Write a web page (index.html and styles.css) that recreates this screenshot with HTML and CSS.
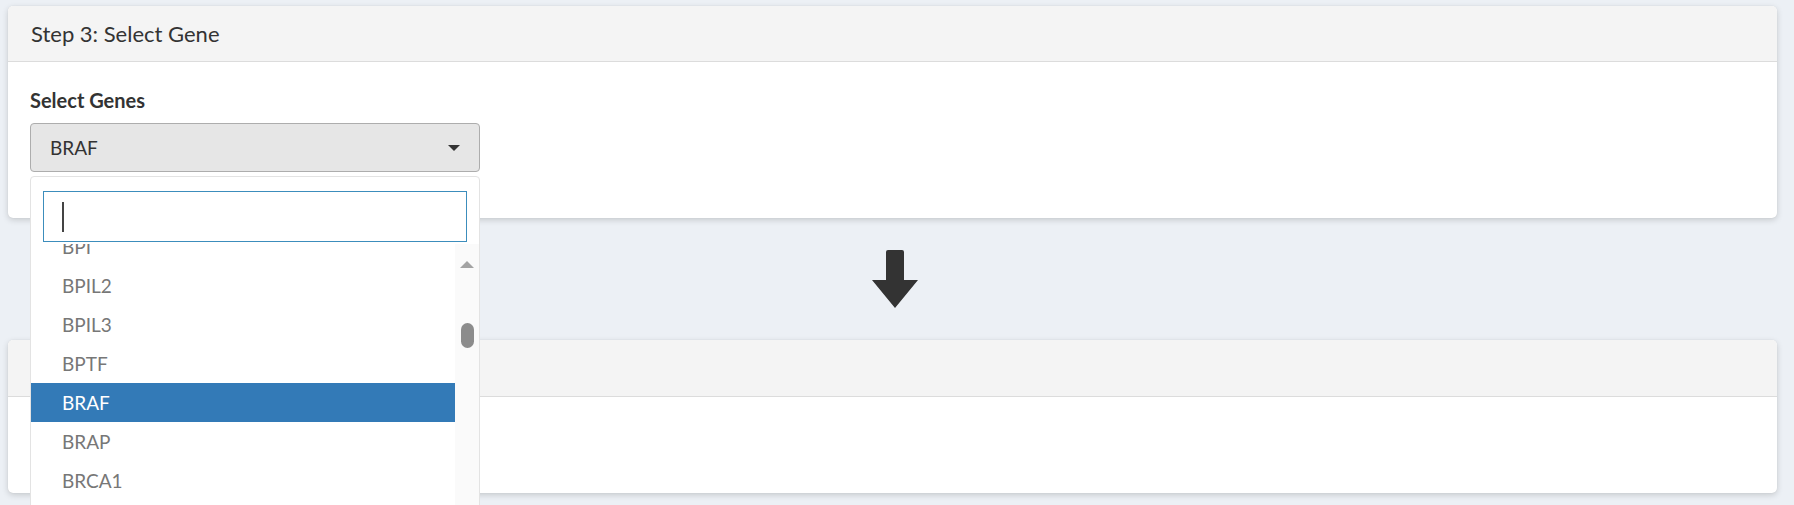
FILE: index.html
```html
<!DOCTYPE html>
<html>
<head>
<meta charset="utf-8">
<link rel="stylesheet" href="styles.css">
</head>
<body>
<div class="page">
  <section class="card card-step3">
    <header class="card-header"><h3 class="card-title">Step 3: Select Gene</h3></header>
    <div class="card-body">
      <label class="field-label">Select Genes</label>
      <div class="field">
        <div class="select-box">
          <span class="select-value">BRAF</span>
          <span class="caret"></span>
        </div>
        <div class="dropdown">
          <div class="search-wrap">
            <div class="search-input"><span class="text-cursor"></span></div>
          </div>
          <div class="list-area">
            <div class="list-viewport">
              <ul class="options">
                <li class="option">BPI</li>
                <li class="option">BPIL2</li>
                <li class="option">BPIL3</li>
                <li class="option">BPTF</li>
                <li class="option active">BRAF</li>
                <li class="option">BRAP</li>
                <li class="option">BRCA1</li>
              </ul>
            </div>
            <div class="scrollbar">
              <span class="scroll-up"></span>
              <span class="scroll-thumb"></span>
            </div>
          </div>
        </div>
      </div>
    </div>
  </section>

  <div class="arrow-row">
    <svg class="down-arrow" width="46" height="58" viewBox="0 0 46 58">
      <path d="M16 0 H30 Q32 0 32 2 V30 H46 L23 58 L0 30 H14 V2 Q14 0 16 0 Z" fill="#333333"/>
    </svg>
  </div>

  <section class="card card-step4">
    <header class="card-header"></header>
    <div class="card-body"></div>
  </section>
</div>
</body>
</html>
```

FILE: styles.css
```css
* { box-sizing: border-box; }
html, body { margin: 0; padding: 0; }
body {
  background: #ecf0f5;
  font-family: "Lato", "Open Sans", sans-serif;
  color: #333333;
  width: 1794px;
  height: 505px;
  overflow: hidden;
}
.page {
  padding: 6px 17px 0 8px;
  display: flex;
  flex-direction: column;
}
.card {
  background: #ffffff;
  border-radius: 5px;
  box-shadow: 0 2px 6px rgba(0, 0, 0, 0.16), 0 0 1px rgba(0, 0, 0, 0.12);
}
.card-header {
  height: 56px;
  background: #f4f4f4;
  border-bottom: 1px solid #dcdcdc;
  border-radius: 5px 5px 0 0;
  display: flex;
  align-items: center;
  padding-left: 23px;
}
.card-title {
  margin: 0;
  font-size: 22px;
  font-weight: 400;
  color: #333333;
}
.card-step3 { height: 212px; }
.card-step3 .card-body { padding: 26px 22px 0 22px; }
.field-label {
  display: block;
  font-size: 20px;
  font-weight: 700;
  line-height: 24px;
  margin-bottom: 11px;
  color: #333333;
}
.field {
  position: relative;
  width: 450px;
}
.select-box {
  height: 49px;
  background: #e6e6e6;
  border: 1px solid #adadad;
  border-radius: 4px;
  display: flex;
  align-items: center;
  justify-content: space-between;
  padding: 0 19px 0 19px;
}
.select-value {
  font-size: 19px;
  color: #333333;
}
.caret {
  width: 0;
  height: 0;
  border-left: 6px solid transparent;
  border-right: 6px solid transparent;
  border-top: 6px solid #333333;
  margin-top: 1px;
}
.dropdown {
  position: absolute;
  top: 53px;
  left: 0;
  width: 450px;
  height: 340px;
  background: #ffffff;
  border: 1px solid #e3e3e3;
  border-radius: 4px 4px 0 0;
  z-index: 10;
  display: flex;
  flex-direction: column;
}
.search-wrap {
  padding: 14px 12px 2px 12px;
}
.search-input {
  height: 51px;
  border: 1px solid #3c8dbc;
  display: flex;
  align-items: center;
  padding-left: 18px;
}
.text-cursor {
  width: 2px;
  height: 30px;
  background: #444444;
}
.list-area {
  flex: 1;
  display: flex;
  min-height: 0;
}
.list-viewport {
  flex: 1;
  overflow: hidden;
}
.options {
  list-style: none;
  margin: -17px 0 0 0;
  padding: 0;
}
.option {
  height: 39px;
  line-height: 39px;
  padding-left: 31px;
  font-size: 19px;
  color: #777777;
}
.option.active {
  background: #337ab7;
  color: #ffffff;
}
.scrollbar {
  width: 24px;
  background: #fafafa;
  display: flex;
  flex-direction: column;
  align-items: center;
  padding-top: 17px;
}
.scroll-up {
  width: 0;
  height: 0;
  border-left: 7.5px solid transparent;
  border-right: 7.5px solid transparent;
  border-bottom: 7px solid #a3a3a3;
}
.scroll-thumb {
  margin-top: 55px;
  width: 13px;
  height: 25px;
  border-radius: 7px;
  background: #8c8c8c;
}
.arrow-row {
  height: 122px;
  display: flex;
  align-items: center;
  justify-content: center;
  padding-left: 5px;
}
.card-step4 { height: 153px; }
.card-step4 .card-header { height: 57px; }
```
